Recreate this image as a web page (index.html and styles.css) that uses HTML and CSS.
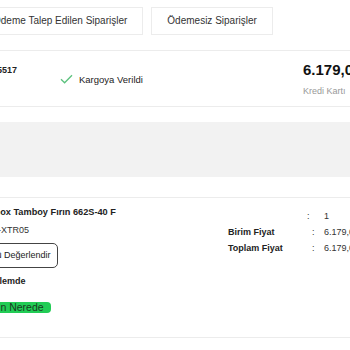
FILE: index.html
```html
<!DOCTYPE html>
<html lang="tr">
<head>
<meta charset="utf-8">
<link rel="stylesheet" href="styles.css">
</head>
<body>
<div class="page">
  <div class="tabs">
    <div class="tab tab-first">Ödeme Talep Edilen Siparişler</div>
    <div class="tab">Ödemesiz Siparişler</div>
  </div>

  <div class="order">
    <div class="order-no">#3105517</div>
    <div class="order-status">
      <svg class="check" width="13" height="10" viewBox="0 0 13 10"><path d="M1 5.2 L4.6 8.8 L12 1.2" fill="none" stroke="#5cc27e" stroke-width="1.3"/></svg>
      <span>Kargoya Verildi</span>
    </div>
    <div class="order-price">
      <div class="price">6.179,00 TL</div>
      <div class="pay">Kredi Kartı</div>
    </div>
  </div>

  <div class="band"></div>

  <div class="product">
    <div class="product-left">
      <div class="title">İnox Tamboy Fırın 662S-40 F</div>
      <div class="code">S-XTR05</div>
      <div class="btn">Ürünü Değerlendir</div>
      <div class="state">İşlemde</div>
      <div class="pill-row"><span class="pill">Siparişin Nerede</span></div>
    </div>
    <div class="product-right">
      <div class="row row-first"><span class="lbl"></span><span class="colon">:</span><span class="val">1</span></div>
      <div class="row"><span class="lbl">Birim Fiyat</span><span class="colon">:</span><span class="val">6.179,00 TL</span></div>
      <div class="row"><span class="lbl">Toplam Fiyat</span><span class="colon">:</span><span class="val">6.179,00 TL</span></div>
    </div>
  </div>
</div>
</body>
</html>
```

FILE: styles.css
```css
html, body {
  margin: 0;
  padding: 0;
  background: #fff;
}
body {
  width: 350px;
  height: 350px;
  overflow: hidden;
  font-family: "Liberation Sans", Arial, sans-serif;
  color: #333;
}
.page {
  width: 350px;
  overflow: hidden;
  padding-top: 7px;
}
.tabs {
  display: flex;
  gap: 8px;
  margin-left: -23px;
  white-space: nowrap;
}
.tab {
  flex-shrink: 0;
  border: 1px solid #ececec;
  padding: 0 15px;
  height: 26px;
  line-height: 26px;
  font-size: 10px;
  color: #333;
}
.order {
  margin-top: 15px;
  margin-left: -40px;
  width: 440px;
  height: 55px;
  border-top: 1px solid #ececec;
  border-bottom: 1px solid #ececec;
  display: flex;
  white-space: nowrap;
}
.order > div {
  flex-shrink: 0;
}
.order-no {
  width: 100px;
  padding-top: 14px;
  font-size: 9px;
  font-weight: bold;
  color: #222;
  line-height: 11px;
  padding-left: 17px;
  box-sizing: border-box;
}
.order-status {
  width: 243px;
  display: flex;
  align-items: flex-start;
  gap: 6px;
  padding-top: 23px;
  font-size: 9.5px;
  color: #222;
  line-height: 11px;
}
.order-price {
  padding-top: 10px;
}
.price {
  font-size: 15px;
  font-weight: bold;
  color: #111;
  line-height: 17px;
}
.pay {
  margin-top: 8px;
  font-size: 9px;
  color: #999;
  line-height: 11px;
}
.band {
  margin-top: 15px;
  height: 55px;
  background: #f2f2f2;
}
.product {
  margin-top: 20px;
  margin-left: -8px;
  width: 440px;
  height: 139px;
  border-top: 1px solid #ececec;
  border-bottom: 1px solid #ececec;
  display: flex;
  white-space: nowrap;
}
.product-left {
  flex-shrink: 0;
  width: 236px;
  padding-top: 8px;
}
.title {
  font-size: 9.2px;
  font-weight: bold;
  color: #222;
  line-height: 12px;
}
.code {
  margin-top: 6px;
  font-size: 9px;
  color: #333;
  line-height: 12px;
}
.btn {
  display: inline-block;
  margin-top: 7px;
  margin-left: -23px;
  height: 23px;
  line-height: 23px;
  padding: 0 6px 0 7px;
  border: 1px solid #444;
  border-radius: 5px;
  font-size: 9px;
  color: #222;
}
.state {
  margin-top: 7px;
  font-size: 9px;
  font-weight: bold;
  color: #222;
  line-height: 12px;
}
.pill-row {
  margin-top: 13px;
  line-height: 11px;
}
.pill {
  display: inline-block;
  margin-left: -34px;
  background: #22cc55;
  border-radius: 4px;
  padding: 0 7px 0 8px;
  height: 11px;
  line-height: 11px;
  font-size: 10.5px;
  color: #1a3a22;
}
.product-right {
  flex-shrink: 0;
  padding-top: 10px;
}
.row {
  display: flex;
  height: 16px;
  line-height: 16px;
  font-size: 9px;
}
.lbl {
  width: 84px;
  font-weight: bold;
  color: #222;
}
.colon {
  width: 12px;
  color: #333;
}
.val {
  color: #333;
}
.row-first .lbl {
  width: 79px;
}
.row-first .colon {
  width: 17px;
}
```
